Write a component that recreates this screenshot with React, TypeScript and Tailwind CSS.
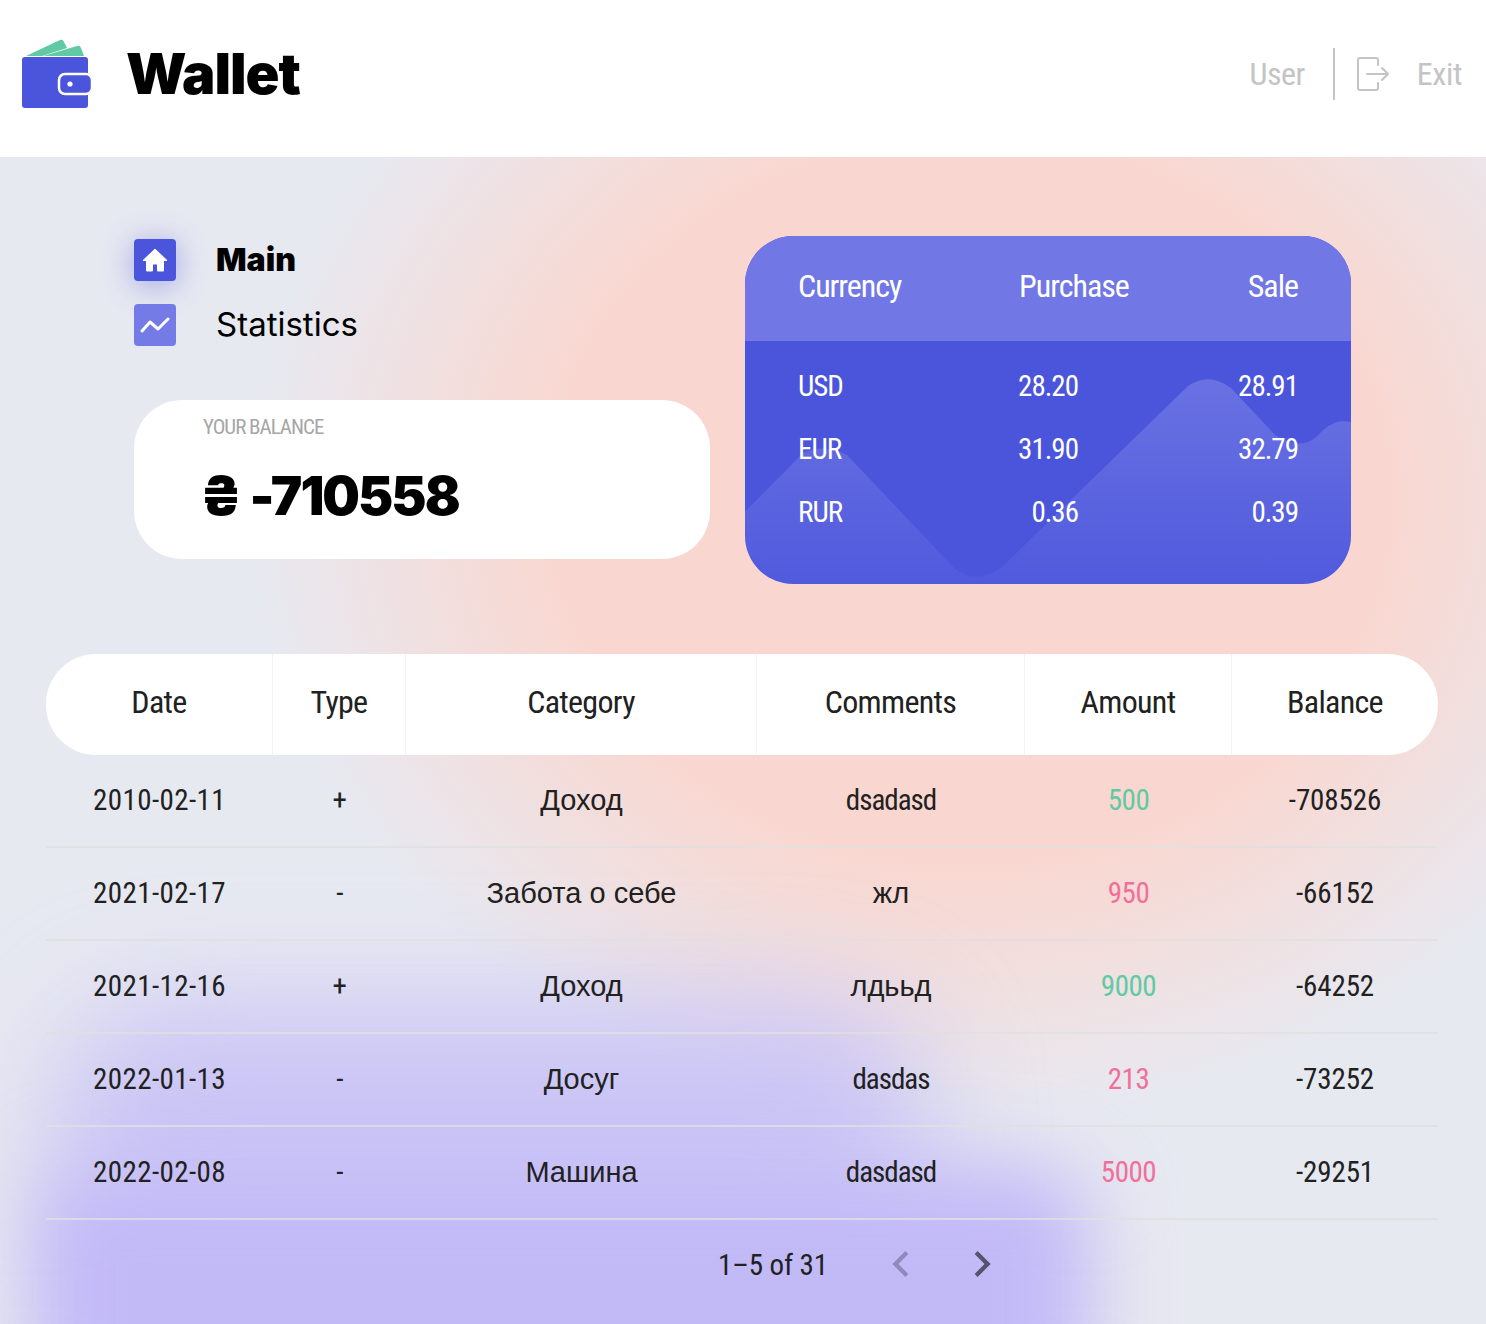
import React from 'react';

const narrow = 'font-["Roboto",sans-serif] [font-stretch:75%] font-normal tracking-[-0.5px]';
const heavy = 'font-["Inter","Noto_Sans",sans-serif] [font-stretch:100%]';
const cyrillic = 'font-["Liberation_Sans",sans-serif] text-[#212121] [font-stretch:100%] tracking-normal';

const columns = ['Date', 'Type', 'Category', 'Comments', 'Amount', 'Balance'];
const grid = 'grid grid-cols-[227px_133px_351px_268px_207px_206px]';

const rates = [
  { code: 'USD', buy: '28.20', sell: '28.91' },
  { code: 'EUR', buy: '31.90', sell: '32.79' },
  { code: 'RUR', buy: '0.36', sell: '0.39' },
];

const rows = [
  { date: '2010-02-11', type: '+', category: 'Доход', comment: 'dsadasd', amount: '500', balance: '-708526' },
  { date: '2021-02-17', type: '-', category: 'Забота о себе', comment: 'жл', amount: '950', balance: '-66152' },
  { date: '2021-12-16', type: '+', category: 'Доход', comment: 'лдььд', amount: '9000', balance: '-64252' },
  { date: '2022-01-13', type: '-', category: 'Досуг', comment: 'dasdas', amount: '213', balance: '-73252' },
  { date: '2022-02-08', type: '-', category: 'Машина', comment: 'dasdasd', amount: '5000', balance: '-29251' },
];

const WalletLogo = () => (
  <svg width="72" height="70" viewBox="0 0 72 70" className="shrink-0">
    <path d="M4 17 L38 1 Q41 0 42 3 L45 9 L20 17 Z" fill="#5fcaa3" />
    <path d="M21 17 L55 7 Q58 6 59 9 L62 17 Z" fill="#5fcaa3" />
    <rect x="0" y="18" width="66" height="51" rx="3" fill="#4b55dc" />
    <rect x="37" y="35" width="33" height="20" rx="6" fill="#4b55dc" stroke="#fff" strokeWidth="2.5" />
    <circle cx="48" cy="45" r="2.6" fill="#fff" />
  </svg>
);

const ExitIcon = () => (
  <svg width="34" height="36" viewBox="0 0 34 36" fill="none" stroke="#c4c4c4" strokeWidth="2" strokeLinecap="round" strokeLinejoin="round">
    <path d="M22 9 V4 Q22 2 20 2 H4 Q2 2 2 4 V32 Q2 34 4 34 H20 Q22 34 22 32 V27" />
    <path d="M11 18 H32 M26 12 L32 18 L26 24" />
  </svg>
);

const HomeIcon = () => (
  <svg width="26" height="24" viewBox="0 0 26 24">
    <path d="M13 1 L25 12.5 H21.5 V23 H15.5 V16 H10.5 V23 H4.5 V12.5 H1 Z" fill="#fff" stroke="#fff" strokeWidth="1" strokeLinejoin="round" />
  </svg>
);

const ChartIcon = () => (
  <svg width="30" height="18" viewBox="0 0 30 18" fill="none" stroke="#fff" strokeWidth="3" strokeLinecap="round" strokeLinejoin="round">
    <path d="M2 15 L10 6 L18 13 L28 3" />
  </svg>
);

const Chevron = ({ d, className }: { d: string; className: string }) => (
  <svg width="52" height="52" viewBox="0 0 24 24" className={className}>
    <path d={d} fill="currentColor" />
  </svg>
);

const App: React.FC = () => {
  return (
    <div
      className={`relative isolate w-[1486px] h-[1324px] overflow-hidden bg-[#e7e9f1] bg-[radial-gradient(ellipse_720px_620px_at_970px_500px,#f9d7d0_58%,transparent_100%)] ${narrow}`}
    >
      {/* soft purple glow behind the table */}
      <div className="absolute -z-10 left-[50px] top-[1000px] w-[880px] h-[240px] rounded-full bg-[#c2b9f7]/75 blur-[55px]" />
      <div className="absolute -z-10 left-[30px] top-[1165px] w-[1060px] h-[260px] rounded-[60px] bg-[#c2b9f7] blur-[40px]" />

      <header className="h-[157px] bg-white flex items-center pl-[22px] pr-6 pb-[10px]">
        <WalletLogo />
        <span className={`ml-[32px] text-[56px] font-black text-black tracking-[-1px] ${heavy}`}>Wallet</span>
        <div className="ml-auto flex items-center text-[32px] text-[#c4c4c4]">
          <span>User</span>
          <div className="w-0.5 h-[52px] bg-[#c4c4c4] ml-7 mr-[21px]" />
          <ExitIcon />
          <span className="ml-[27px] tracking-[-0.4px]">Exit</span>
        </div>
      </header>

      <section className="flex items-start pt-[79px] pl-[134px] h-[497px]">
        <div className="w-[576px]">
          <nav className="flex flex-col gap-[23px] pt-[3px]">
            <div className="flex items-center gap-10 h-[42px]">
              <div className="w-[42px] h-[42px] rounded bg-[#4b55dc] flex items-center justify-center shadow-[0_4px_30px_rgba(75,85,220,0.45)]">
                <HomeIcon />
              </div>
              <span className={`text-[32px] font-black text-black tracking-normal ${heavy}`}>Main</span>
            </div>
            <div className="flex items-center gap-10 h-[42px]">
              <div className="w-[42px] h-[42px] rounded bg-[#747be6] flex items-center justify-center">
                <ChartIcon />
              </div>
              <span className={`text-[33px] font-normal text-black tracking-normal ${heavy}`}>Statistics</span>
            </div>
          </nav>
          <div className="mt-[54px] h-[159px] bg-white rounded-[48px] pl-[69px] pt-[15px]">
            <div className="text-[21px] leading-6 text-[#a6a6a6] tracking-[-1px]">YOUR BALANCE</div>
            <div className={`mt-[21px] -ml-1 text-[53px] leading-[72px] font-black text-black tracking-[-2px] ${heavy}`}>₴ -710558</div>
          </div>
        </div>

        <div className="relative ml-[35px] w-[606px] h-[348px] rounded-[48px] overflow-hidden bg-[#4b55dc] text-white">
          <svg width="606" height="348" viewBox="0 0 606 348" className="absolute inset-0">
            <defs>
              <linearGradient id="wave" x1="0" y1="0" x2="0" y2="1">
                <stop offset="0" stopColor="#fff" stopOpacity="0.17" />
                <stop offset="1" stopColor="#fff" stopOpacity="0.03" />
              </linearGradient>
            </defs>
            <path
              d="M0 276 L58 217 Q80 207 102 219 L209 332 Q231 350 257 331 L442 151 Q463 135 486 152 L530 199 Q556 215 571 201 Q585 186 597 185 L606 186 V348 H0 Z"
              fill="url(#wave)"
            />
          </svg>
          <div className="relative h-[105px] bg-[#7277e6] grid grid-cols-[221px_1fr_auto] items-center px-[53px] text-[32px] pb-[6px] tracking-[-1px]">
            <span>Currency</span>
            <span>Purchase</span>
            <span>Sale</span>
          </div>
          <div className="relative px-[53px] pt-[14px] text-[29px] tracking-[-1px]">
            {rates.map((r) => (
              <div key={r.code} className="grid grid-cols-[100px_180px_220px] items-center h-[63px]">
                <span>{r.code}</span>
                <span className="text-right">{r.buy}</span>
                <span className="text-right">{r.sell}</span>
              </div>
            ))}
          </div>
        </div>
      </section>

      <section className="mx-[46px] w-[1392px] text-center text-[#212121]">
        <div className={`${grid} h-[101px] bg-white rounded-[50px] items-center text-[32px] tracking-[-0.7px]`}>
          {columns.map((c, i) => (
            <div key={c} className={`h-full flex items-center justify-center pb-[6px] ${i < 5 ? 'border-r border-[#f4f4f4]' : ''}`}>
              {c}
            </div>
          ))}
        </div>
        {rows.map((r) => {
          const income = r.type === '+';
          const isCyrillic = /[а-я]/i.test(r.comment);
          return (
            <div key={r.date} className={`${grid} h-[93px] items-center border-b-2 border-[#e0e0e0]/80 text-[29px]`}>
              <span className="tracking-[0.4px]">{r.date}</span>
              <span>{r.type}</span>
              <span className={cyrillic}>{r.category}</span>
              <span className={isCyrillic ? cyrillic : 'tracking-[-1px]'}>{r.comment}</span>
              <span className={income ? 'text-[#5fcaa3]' : 'text-[#f0709a]'}>{r.amount}</span>
              <span className="tracking-[-0.1px]">{r.balance}</span>
            </div>
          );
        })}
        <div className="h-[92px] flex items-center pl-[672px] text-[29px]">
          <span className="w-[108px] shrink-0 whitespace-nowrap text-left tracking-[-0.1px]">1–5 of 31</span>
          <Chevron d="M15.41 7.41L14 6l-6 6 6 6 1.41-1.41L10.83 12z" className="ml-[49px] mb-1 text-black/25" />
          <Chevron d="M10 6L8.59 7.41 13.17 12l-4.58 4.59L10 18l6-6z" className="ml-[29px] mb-1 text-black/55" />
        </div>
      </section>
    </div>
  );
};

export default App;
